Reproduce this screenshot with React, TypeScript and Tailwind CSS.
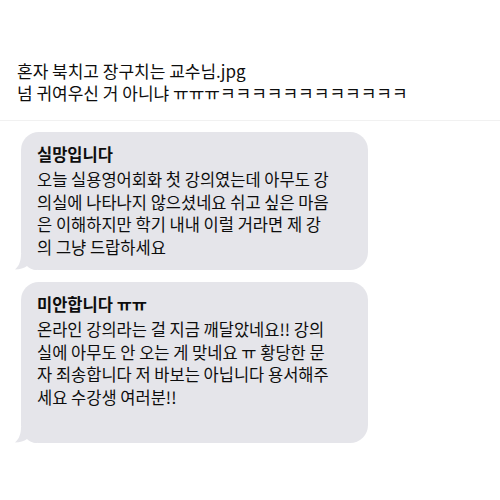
import React from 'react';

const font = { fontFamily: '"Noto Sans CJK KR", "Noto Sans", sans-serif' };

const Tail: React.FC = () => (
  <svg
    className="absolute -left-[6px] bottom-0"
    width="22"
    height="16"
    viewBox="0 0 22 16"
  >
    <path d="M6 0 C6 7 4 12 0 15.5 C5 15.5 9 14 12 12 C14 14 17 16 22 16 L22 0 Z" fill="#e5e5ea" />
  </svg>
);

interface BubbleProps {
  title: string;
  lines: string[];
  extraBottom?: boolean;
}

const Bubble: React.FC<BubbleProps> = ({ title, lines, extraBottom }) => (
  <div className="relative ml-[21px] w-[347px]">
    <div
      className={`relative rounded-[18px] bg-[#e5e5ea] pl-[16px] pr-[10px] pt-[11px] text-[16.5px] leading-[22.5px] text-[#0d0d0d] ${
        extraBottom ? 'pb-[35px]' : 'pb-[12px]'
      }`}
    >
      <div className="mb-[2.5px] font-bold">{title}</div>
      {lines.map((l) => (
        <div key={l} className="whitespace-nowrap">
          {l}
        </div>
      ))}
    </div>
    <Tail />
  </div>
);

export default function App() {
  return (
    <div className="h-[500px] w-[500px] overflow-hidden bg-white" style={font}>
      <p className="whitespace-nowrap pl-[17px] pt-[60px] text-[17px] leading-[22px] text-[#0d0d0d]">
        혼자 북치고 장구치는 교수님.jpg
        <br />
        넘 귀여우신 거 아니냐 ㅠㅠㅠㅋㅋㅋㅋㅋㅋㅋㅋㅋㅋㅋㅋ
      </p>
      <div className="mt-[16px] h-px bg-[#f1f1f1]" />
      <div className="mt-[11px] flex flex-col gap-[12px]">
        <Bubble
          title="실망입니다"
          lines={[
            '오늘 실용영어회화 첫 강의였는데 아무도 강',
            '의실에 나타나지 않으셨네요 쉬고 싶은 마음',
            '은 이해하지만 학기 내내 이럴 거라면 제 강',
            '의 그냥 드랍하세요',
          ]}
        />
        <Bubble
          title="미안합니다 ㅠㅠ"
          lines={[
            '온라인 강의라는 걸 지금 깨달았네요!! 강의',
            '실에 아무도 안 오는 게 맞네요 ㅠ 황당한 문',
            '자 죄송합니다 저 바보는 아닙니다 용서해주',
            '세요 수강생 여러분!!',
          ]}
          extraBottom
        />
      </div>
    </div>
  );
}
